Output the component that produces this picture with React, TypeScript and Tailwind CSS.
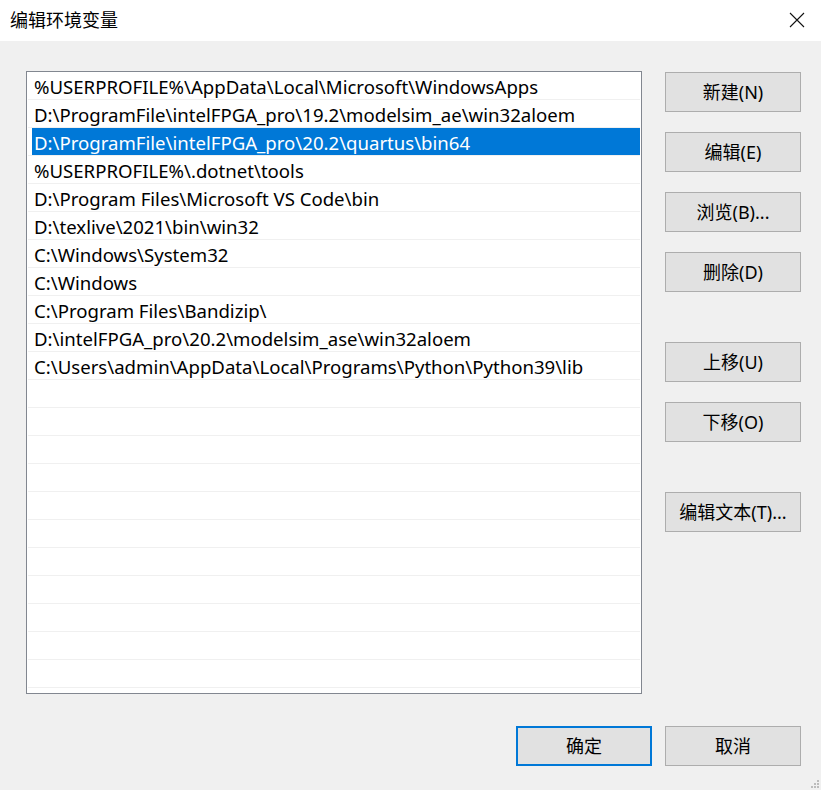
import React from "react";

const paths = [
  "%USERPROFILE%\\AppData\\Local\\Microsoft\\WindowsApps",
  "D:\\ProgramFile\\intelFPGA_pro\\19.2\\modelsim_ae\\win32aloem",
  "D:\\ProgramFile\\intelFPGA_pro\\20.2\\quartus\\bin64",
  "%USERPROFILE%\\.dotnet\\tools",
  "D:\\Program Files\\Microsoft VS Code\\bin",
  "D:\\texlive\\2021\\bin\\win32",
  "C:\\Windows\\System32",
  "C:\\Windows",
  "C:\\Program Files\\Bandizip\\",
  "D:\\intelFPGA_pro\\20.2\\modelsim_ase\\win32aloem",
  "C:\\Users\\admin\\AppData\\Local\\Programs\\Python\\Python39\\lib",
];

const font = { fontFamily: '"Noto Sans", "Noto Sans CJK SC", sans-serif' };

const Btn = ({ label, primary }: { label: string; primary?: boolean }) => (
  <button
    className={
      primary
        ? "w-[136px] h-[40px] bg-[#e1e1e1] border-2 border-[#0078d7] text-[18px] text-black"
        : "w-[136px] h-[40px] bg-[#e1e1e1] border border-[#adadad] text-[18px] text-black"
    }
  >
    {label}
  </button>
);

export default function App() {
  const rows = Array.from({ length: 23 }, (_, i) => paths[i] ?? "");
  return (
    <div className="w-[821px] h-[790px] bg-[#f0f0f0] flex flex-col relative overflow-hidden" style={font}>
      <div className="h-[41px] bg-white flex items-center justify-between pl-[10px] pr-[16px]">
        <span className="text-[18px] text-black">编辑环境变量</span>
        <svg width="16" height="16" viewBox="0 0 16 16" className="mt-[-2px]">
          <path d="M1 1L15 15M15 1L1 15" stroke="#111" strokeWidth="1.1" />
        </svg>
      </div>

      <div className="flex pl-[26px] pt-[30px]">
        <div className="w-[616px] h-[623px] bg-white border border-[#828790] overflow-hidden pl-[1px] pr-[1px]">
          {rows.map((p, i) => (
            <div key={i} className="h-[28px] border-b border-[#f0f0f0] pl-[4px]">
              <div
                className={
                  i === 2
                    ? "h-full bg-[#0078d7] text-white text-[18.6px] leading-[27px] pt-[1px] pl-[2px] whitespace-nowrap"
                    : "h-full text-black text-[18.6px] leading-[27px] pt-[1px] pl-[2px] whitespace-nowrap"
                }
              >
                {p}
              </div>
            </div>
          ))}
        </div>

        <div className="ml-[23px] flex flex-col pt-[1px]">
          <Btn label="新建(N)" />
          <div className="h-[20px]" />
          <Btn label="编辑(E)" />
          <div className="h-[20px]" />
          <Btn label="浏览(B)..." />
          <div className="h-[20px]" />
          <Btn label="删除(D)" />
          <div className="h-[50px]" />
          <Btn label="上移(U)" />
          <div className="h-[20px]" />
          <Btn label="下移(O)" />
          <div className="h-[50px]" />
          <Btn label="编辑文本(T)..." />
        </div>
      </div>

      <div className="flex justify-end gap-[13px] pr-[20px] mt-[32px]">
        <Btn label="确定" primary />
        <Btn label="取消" />
      </div>

      <div className="absolute right-[2px] bottom-[2px] grid grid-cols-3 gap-[1px]">
        {[0, 0, 1, 0, 1, 1, 1, 1, 1].map((v, i) => (
          <div key={i} className={v ? "w-[2px] h-[2px] bg-[#bcbcbc]" : "w-[2px] h-[2px]"} />
        ))}
      </div>
    </div>
  );
}
